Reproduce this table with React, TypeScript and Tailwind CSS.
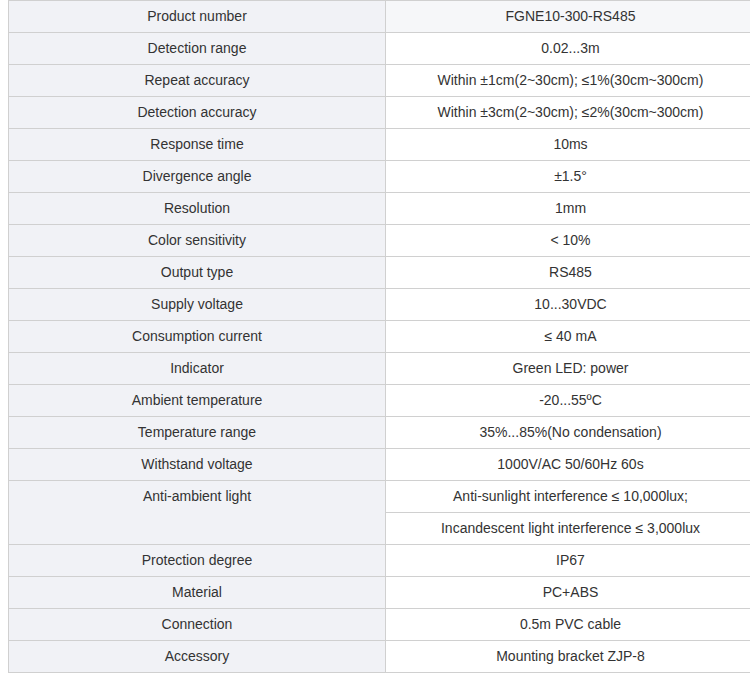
import React from "react";

type Row = { label: string; values: string[] };

const rows: Row[] = [
  { label: "Product number", values: ["FGNE10-300-RS485"] },
  { label: "Detection range", values: ["0.02...3m"] },
  { label: "Repeat accuracy", values: ["Within ±1cm(2~30cm); ≤1%(30cm~300cm)"] },
  { label: "Detection accuracy", values: ["Within ±3cm(2~30cm); ≤2%(30cm~300cm)"] },
  { label: "Response time", values: ["10ms"] },
  { label: "Divergence angle", values: ["±1.5°"] },
  { label: "Resolution", values: ["1mm"] },
  { label: "Color sensitivity", values: ["< 10%"] },
  { label: "Output type", values: ["RS485"] },
  { label: "Supply voltage", values: ["10...30VDC"] },
  { label: "Consumption current", values: ["≤ 40 mA"] },
  { label: "Indicator", values: ["Green LED: power"] },
  { label: "Ambient temperature", values: ["-20...55ºC"] },
  { label: "Temperature range", values: ["35%...85%(No condensation)"] },
  { label: "Withstand voltage", values: ["1000V/AC 50/60Hz 60s"] },
  {
    label: "Anti-ambient light",
    values: ["Anti-sunlight interference ≤ 10,000lux;", "Incandescent light interference ≤ 3,000lux"],
  },
  { label: "Protection degree", values: ["IP67"] },
  { label: "Material", values: ["PC+ABS"] },
  { label: "Connection", values: ["0.5m PVC cable"] },
  { label: "Accessory", values: ["Mounting bracket ZJP-8"] },
];

export default function App() {
  return (
    <div className="w-[750px] h-[673px] overflow-hidden bg-white">
      <div
        className="ml-[8px] w-[748px] grid grid-cols-[377px_370px] border-l border-t border-[#d0d0d0] text-[14px] text-[#333333]"
        style={{ fontFamily: '"Liberation Sans", Arial, sans-serif' }}
      >
        {rows.map((r, i) => (
          <React.Fragment key={r.label}>
            <div
              className={`bg-[#f1f2f6] border-r border-b border-[#d0d0d0] text-center leading-[31px] ${
                r.values.length === 2 ? "row-span-2 h-[64px]" : "h-[32px]"
              }`}
            >
              {r.label}
            </div>
            {r.values.map((v) => (
              <div
                key={v}
                className={`h-[32px] border-r border-b border-[#d0d0d0] text-center leading-[31px] whitespace-nowrap ${
                  i === 0 ? "bg-[#f6f7f9]" : "bg-white"
                }`}
              >
                {v}
              </div>
            ))}
          </React.Fragment>
        ))}
      </div>
    </div>
  );
}
